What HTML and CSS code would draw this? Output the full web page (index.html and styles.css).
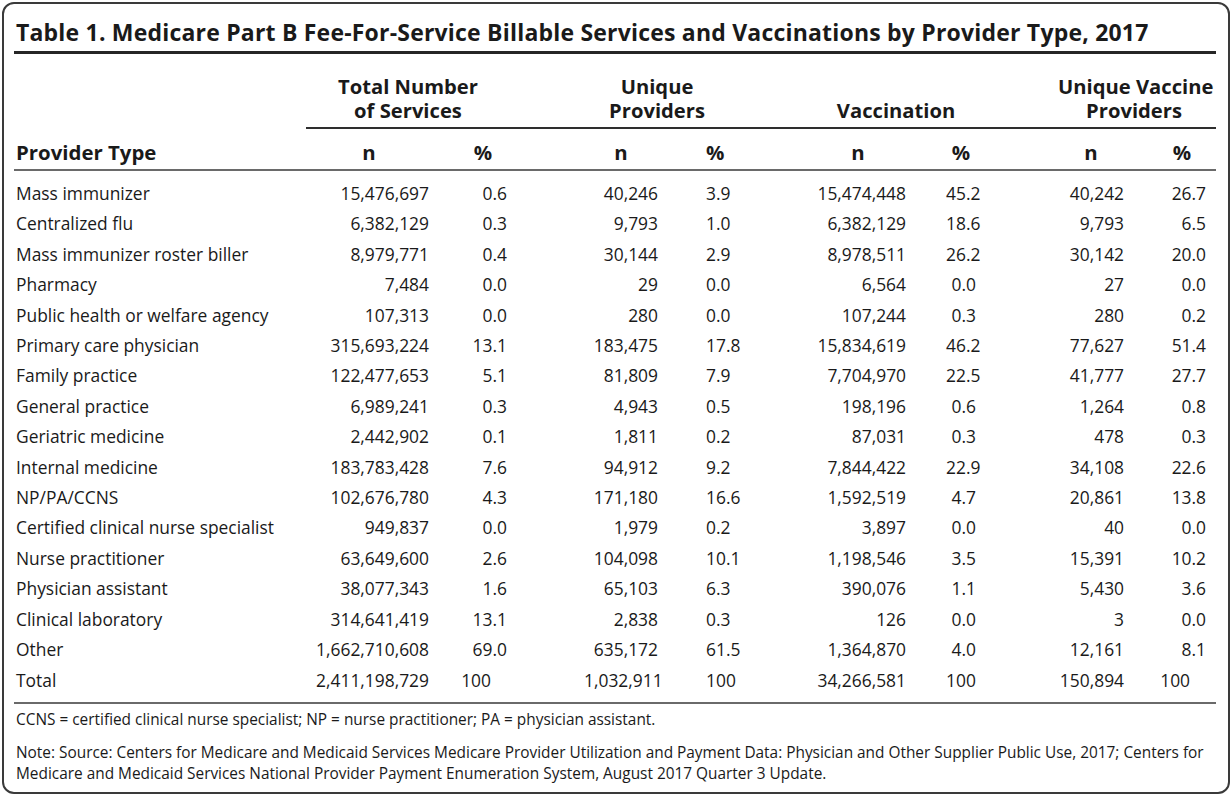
FILE: index.html
```html
<!DOCTYPE html>
<html lang="en">
<head>
<meta charset="utf-8">
<title>Table 1</title>
<link rel="stylesheet" href="styles.css">
</head>
<body>
<div class="card">
  <h1 class="title">Table 1. Medicare Part B Fee-For-Service Billable Services and Vaccinations by Provider Type, 2017</h1>
  <table class="data">
    <colgroup>
      <col class="w0"><col class="w1"><col class="w2"><col class="w3"><col class="w4"><col class="w5"><col class="w6"><col class="w7"><col class="w8">
    </colgroup>
    <thead>
      <tr class="groups">
        <th class="gblank"></th>
        <th colspan="2" class="g g1">Total Number<br>of Services</th>
        <th colspan="2" class="g g2">Unique<br>Providers</th>
        <th colspan="2" class="g g3">Vaccination</th>
        <th colspan="2" class="g g4">Unique Vaccine<br>Providers</th>
      </tr>
      <tr class="subs">
        <th class="ptype">Provider Type</th>
        <th>n</th><th>%</th><th>n</th><th>%</th><th>n</th><th>%</th><th>n</th><th>%</th>
      </tr>
    </thead>
    <tbody>
      <tr><td>Mass immunizer</td><td>15,476,697</td><td>0.6</td><td>40,246</td><td>3.9</td><td>15,474,448</td><td>45.2</td><td>40,242</td><td>26.7</td></tr>
      <tr><td>Centralized flu</td><td>6,382,129</td><td>0.3</td><td>9,793</td><td>1.0</td><td>6,382,129</td><td>18.6</td><td>9,793</td><td>6.5</td></tr>
      <tr><td>Mass immunizer roster biller</td><td>8,979,771</td><td>0.4</td><td>30,144</td><td>2.9</td><td>8,978,511</td><td>26.2</td><td>30,142</td><td>20.0</td></tr>
      <tr><td>Pharmacy</td><td>7,484</td><td>0.0</td><td>29</td><td>0.0</td><td>6,564</td><td>0.0</td><td>27</td><td>0.0</td></tr>
      <tr><td>Public health or welfare agency</td><td>107,313</td><td>0.0</td><td>280</td><td>0.0</td><td>107,244</td><td>0.3</td><td>280</td><td>0.2</td></tr>
      <tr><td>Primary care physician</td><td>315,693,224</td><td>13.1</td><td>183,475</td><td>17.8</td><td>15,834,619</td><td>46.2</td><td>77,627</td><td>51.4</td></tr>
      <tr><td>Family practice</td><td>122,477,653</td><td>5.1</td><td>81,809</td><td>7.9</td><td>7,704,970</td><td>22.5</td><td>41,777</td><td>27.7</td></tr>
      <tr><td>General practice</td><td>6,989,241</td><td>0.3</td><td>4,943</td><td>0.5</td><td>198,196</td><td>0.6</td><td>1,264</td><td>0.8</td></tr>
      <tr><td>Geriatric medicine</td><td>2,442,902</td><td>0.1</td><td>1,811</td><td>0.2</td><td>87,031</td><td>0.3</td><td>478</td><td>0.3</td></tr>
      <tr><td>Internal medicine</td><td>183,783,428</td><td>7.6</td><td>94,912</td><td>9.2</td><td>7,844,422</td><td>22.9</td><td>34,108</td><td>22.6</td></tr>
      <tr><td>NP/PA/CCNS</td><td>102,676,780</td><td>4.3</td><td>171,180</td><td>16.6</td><td>1,592,519</td><td>4.7</td><td>20,861</td><td>13.8</td></tr>
      <tr><td>Certified clinical nurse specialist</td><td>949,837</td><td>0.0</td><td>1,979</td><td>0.2</td><td>3,897</td><td>0.0</td><td>40</td><td>0.0</td></tr>
      <tr><td>Nurse practitioner</td><td>63,649,600</td><td>2.6</td><td>104,098</td><td>10.1</td><td>1,198,546</td><td>3.5</td><td>15,391</td><td>10.2</td></tr>
      <tr><td>Physician assistant</td><td>38,077,343</td><td>1.6</td><td>65,103</td><td>6.3</td><td>390,076</td><td>1.1</td><td>5,430</td><td>3.6</td></tr>
      <tr><td>Clinical laboratory</td><td>314,641,419</td><td>13.1</td><td>2,838</td><td>0.3</td><td>126</td><td>0.0</td><td>3</td><td>0.0</td></tr>
      <tr><td>Other</td><td>1,662,710,608</td><td>69.0</td><td>635,172</td><td>61.5</td><td>1,364,870</td><td>4.0</td><td>12,161</td><td>8.1</td></tr>
      <tr class="total"><td>Total</td><td>2,411,198,729</td><td class="int">100</td><td>1,032,911</td><td class="int">100</td><td>34,266,581</td><td class="int">100</td><td>150,894</td><td class="int">100</td></tr>
    </tbody>
  </table>
  <div class="notes">
    <p class="abbr">CCNS = certified clinical nurse specialist; NP = nurse practitioner; PA = physician assistant.</p>
    <p class="source">Note: Source: Centers for Medicare and Medicaid Services Medicare Provider Utilization and Payment Data: Physician and Other Supplier Public Use, 2017; Centers for<br>Medicare and Medicaid Services National Provider Payment Enumeration System, August 2017 Quarter 3 Update.</p>
  </div>
</div>
</body>
</html>
```

FILE: styles.css
```css
* { box-sizing: border-box; }

html, body {
  margin: 0;
  padding: 0;
  background: #ffffff;
}

body {
  font-family: "Open Sans", "Noto Sans", "Liberation Sans", sans-serif;
  color: #1a1a1a;
}

.card {
  margin: 2px;
  width: 1228px;
  height: 792px;
  border: 2px solid #3a3a3a;
  border-radius: 12px;
  padding: 14px 12px 0 10px;
}

.title {
  margin: 0;
  padding: 0 0 5px 2px;
  font-size: 23px;
  line-height: 28px;
  font-weight: 700;
  letter-spacing: 0.2px;
  white-space: nowrap;
  border-bottom: 3px solid #262626;
}

.data {
  width: 1202px;
  table-layout: fixed;
  border-collapse: collapse;
  font-size: 17.4px;
}

.w0 { width: 292px; }
.w1 { width: 153px; }
.w2 { width: 125px; }
.w3 { width: 122px; }
.w4 { width: 104px; }
.w5 { width: 136px; }
.w6 { width: 112px; }
.w7 { width: 100px; }
.w8 { width: 58px; }

th, td {
  padding: 0;
}

.groups th {
  font-size: 20.2px;
  font-weight: 700;
  line-height: 24px;
  text-align: center;
  vertical-align: bottom;
  white-space: nowrap;
  padding-top: 20px;
  padding-bottom: 5px;
}

.groups th.g {
  border-bottom: 2px solid #2e2e2e;
}

.groups .g1 { padding-right: 77px; padding-left: 3px; }
.groups .g2 { padding-right: 80px; }
.groups .g3 { padding-right: 76px; }
.groups .g4 { padding-right: 6px; }

.subs th {
  font-size: 20.4px;
  font-weight: 700;
  line-height: 24px;
  text-align: center;
  padding-top: 11px;
  padding-bottom: 5px;
  border-bottom: 2px solid #6a6a6a;
}

.subs th.ptype {
  text-align: left;
  padding-left: 2px;
}

tbody td {
  line-height: 30.4px;
  height: 30.4px;
  text-align: right;
  white-space: nowrap;
}

tbody td:first-child {
  text-align: left;
  padding-left: 2px;
}

.subs th:nth-child(2), tbody td:nth-child(2) { padding-right: 30px; }
.subs th:nth-child(3), tbody td:nth-child(3) { padding-right: 77px; }
.subs th:nth-child(4), tbody td:nth-child(4) { padding-right: 48px; }
.subs th:nth-child(5), tbody td:nth-child(5) { padding-right: 86px; }
.subs th:nth-child(6), tbody td:nth-child(6) { padding-right: 40px; }
.subs th:nth-child(7), tbody td:nth-child(7) { padding-right: 82px; }
.subs th:nth-child(8), tbody td:nth-child(8) { padding-right: 34px; }
.subs th:nth-child(9), tbody td:nth-child(9) { padding-right: 10px; }

.subs th:nth-child(2) { padding-left: 3px; }

tbody tr:first-child td {
  height: 37.4px;
  padding-top: 7px;
}

tbody tr.total td {
  height: 37.4px;
  padding-bottom: 7px;
  border-bottom: 2px solid #6a6a6a;
}

tbody td.int:nth-child(3) { padding-right: 93px; }
tbody td.int:nth-child(5) { padding-right: 102px; }
tbody td.int:nth-child(7) { padding-right: 98px; }
tbody td.int:nth-child(9) { padding-right: 26px; }

.notes {
  padding-left: 2px;
  font-size: 15.4px;
  line-height: 21px;
}

.notes p {
  margin: 0;
  white-space: nowrap;
}

.abbr {
  padding-top: 5px;
}

.source {
  margin-top: 12px !important;
}
```
